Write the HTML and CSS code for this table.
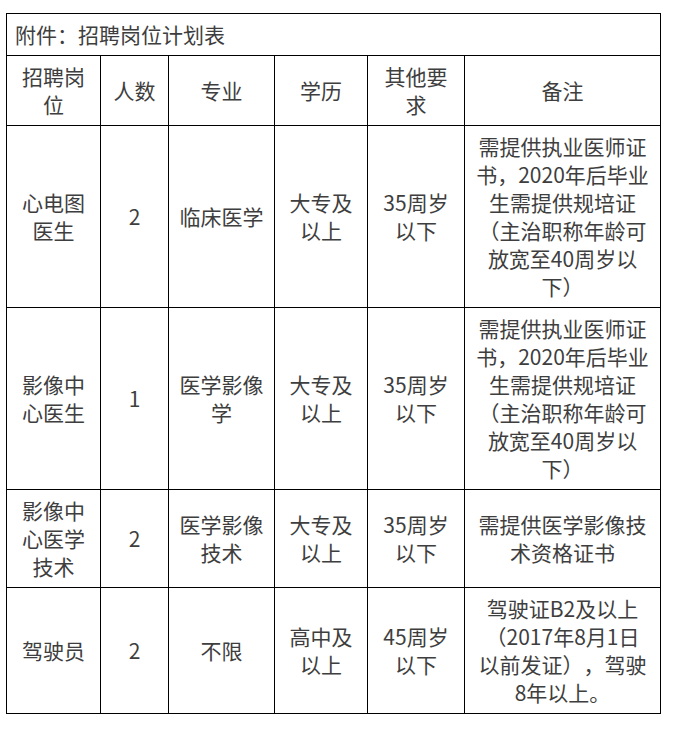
FILE: index.html
```html
<!DOCTYPE html>
<html lang="zh-CN">
<head>
<meta charset="utf-8">
<title>附件：招聘岗位计划表</title>
<link rel="stylesheet" href="styles.css">
</head>
<body>
<table class="plan">
  <colgroup>
    <col class="c1"><col class="c2"><col class="c3"><col class="c4"><col class="c5"><col class="c6">
  </colgroup>
  <tr><td class="title" colspan="6">附件：招聘岗位计划表</td></tr>
  <tr>
    <td>招聘岗位</td><td>人数</td><td>专业</td><td>学历</td><td>其他要求</td><td>备注</td>
  </tr>
  <tr>
    <td>心电图医生</td><td>2</td><td>临床医学</td><td>大专及以上</td><td>35周岁以下</td>
    <td>需提供执业医师证书，2020年后毕业生需提供规培证（主治职称年龄可放宽至40周岁以下）</td>
  </tr>
  <tr>
    <td>影像中心医生</td><td>1</td><td>医学影像学</td><td>大专及以上</td><td>35周岁以下</td>
    <td>需提供执业医师证书，2020年后毕业生需提供规培证（主治职称年龄可放宽至40周岁以下）</td>
  </tr>
  <tr>
    <td>影像中心医学技术</td><td>2</td><td>医学影像技术</td><td>大专及以上</td><td>35周岁以下</td>
    <td>需提供医学影像技术资格证书</td>
  </tr>
  <tr>
    <td>驾驶员</td><td>2</td><td>不限</td><td>高中及以上</td><td>45周岁以下</td>
    <td>驾驶证B2及以上<br>（2017年8月1日<br>以前发证），驾驶<br>8年以上。</td>
  </tr>
</table>
</body>
</html>
```
FILE: styles.css
```css
html, body {
  margin: 0;
  padding: 0;
  background: #ffffff;
}
body {
  padding: 13px 0 0 6px;
  font-family: "Noto Sans CJK SC", "Noto Sans", sans-serif;
  font-size: 21px;
  line-height: 28px;
  color: #3e3e3e;
  text-spacing-trim: space-all;
}
.plan {
  border-collapse: collapse;
  table-layout: fixed;
  width: 654px;
}
.c1 { width: 94px; }
.c2 { width: 68px; }
.c3 { width: 106px; }
.c4 { width: 93px; }
.c5 { width: 97px; }
.c6 { width: 196px; }
.plan td {
  border: 1px solid #000000;
  padding: 6px 10px 7px;
  text-align: center;
  vertical-align: middle;
  word-break: break-all;
}
.plan td.title {
  text-align: left;
  padding-left: 8px;
}
```
